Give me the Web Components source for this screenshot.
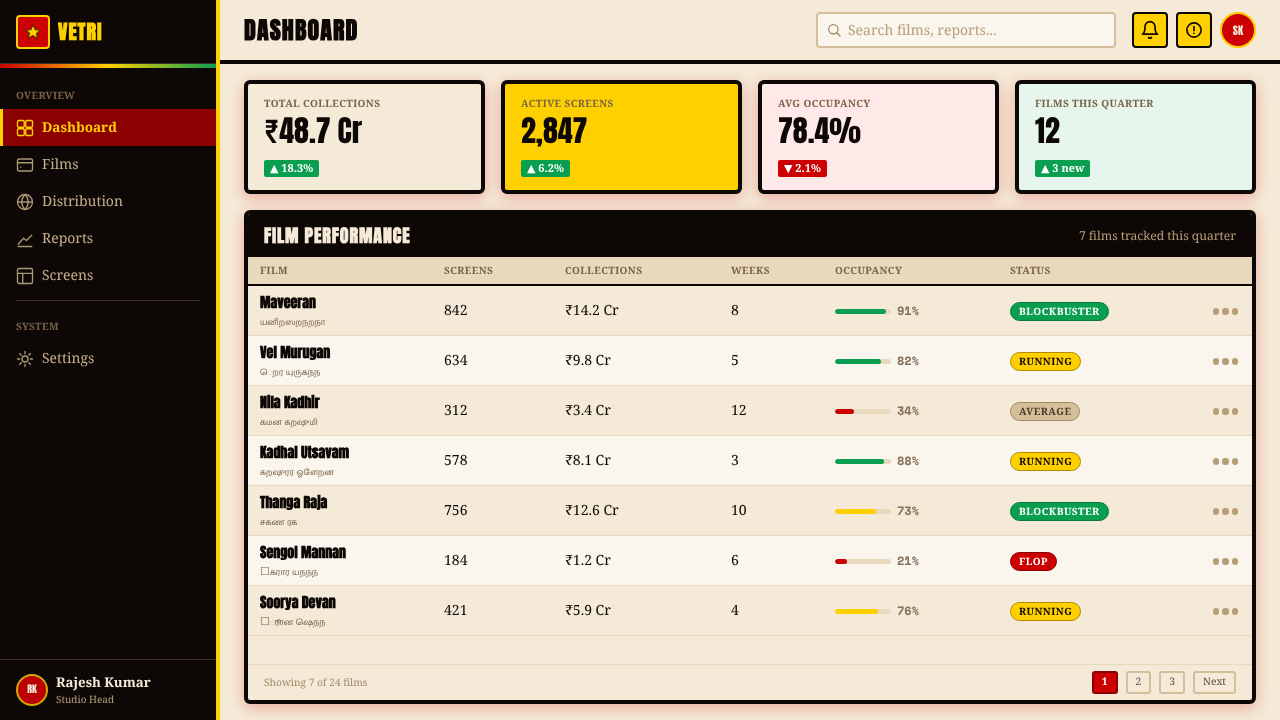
<!doctype html>
<html>
<head>
<meta charset="utf-8">
<title>Vetri Dashboard</title>
<style>
	html, body { margin: 0; height: 100%; }
	body { background: #f5ead8; font-family: 'Noto Serif', serif; color: #0d0806; overflow: hidden; text-rendering: geometricPrecision; }
</style>
</head>
<body>
<vetri-app>
	<vetri-sidebar slot="side"></vetri-sidebar>
	<vetri-topbar slot="top"></vetri-topbar>
	<stat-card slot="stats" label="TOTAL COLLECTIONS" value="₹48.7 Cr" delta="▲ 18.3%"></stat-card>
	<stat-card slot="stats" label="ACTIVE SCREENS" value="2,847" delta="▲ 6.2%" tone="yellow"></stat-card>
	<stat-card slot="stats" label="AVG OCCUPANCY" value="78.4%" delta="▼ 2.1%" tone="pink" down></stat-card>
	<stat-card slot="stats" label="FILMS THIS QUARTER" value="12" delta="▲ 3 new" tone="mint"></stat-card>
	<film-panel slot="panel">
		<film-row name="Maveeran" tamil="யனிறஸறநறநா" screens="842" money="₹14.2 Cr" weeks="8" occ="91" bar="green" status="BLOCKBUSTER"></film-row>
		<film-row alt name="Vel Murugan" tamil="ெறர யுருகநந" screens="634" money="₹9.8 Cr" weeks="5" occ="82" bar="green" status="RUNNING"></film-row>
		<film-row name="Nila Kadhir" tamil="கமன கறஷுமி" screens="312" money="₹3.4 Cr" weeks="12" occ="34" bar="red" status="AVERAGE"></film-row>
		<film-row alt name="Kadhal Utsavam" tamil="கறஷுரர ஓளேறன" screens="578" money="₹8.1 Cr" weeks="3" occ="88" bar="green" status="RUNNING"></film-row>
		<film-row name="Thanga Raja" tamil="சகண ரக" screens="756" money="₹12.6 Cr" weeks="10" occ="73" bar="yellow" status="BLOCKBUSTER"></film-row>
		<film-row alt name="Sengol Mannan" tamil="☐கரார யநநந" screens="184" money="₹1.2 Cr" weeks="6" occ="21" bar="red" status="FLOP"></film-row>
		<film-row name="Soorya Devan" tamil="☐ூரான ஷெநந" screens="421" money="₹5.9 Cr" weeks="4" occ="76" bar="yellow" status="RUNNING"></film-row>
	</film-panel>
</vetri-app>

<script>
// small helper, every element gets an open shadow root from a template string
function shadow(el, html) {
	let t = document.createElement('template')
	t.innerHTML = html
	el.attachShadow({ mode: 'open' }).appendChild(t.content.cloneNode(true))
}

const ICONS = {
	dashboard: '<rect x="2" y="2" width="9" height="9" rx="1.500"/><rect x="13" y="2" width="9" height="9" rx="1.500"/><rect x="2" y="13" width="9" height="9" rx="1.500"/><rect x="13" y="13" width="9" height="9" rx="1.500"/>',
	films: '<rect x="2" y="4" width="20" height="16" rx="2"/><path d="M2 9h20M6 15h.01"/>',
	globe: '<circle cx="12" cy="12" r="10"/><path d="M2 12h20M12 2c3.200 3 4.200 6.500 4.200 10s-1 7-4.200 10c-3.200-3-4.200-6.500-4.200-10s1-7 4.200-10z"/>',
	reports: '<path d="M3 22h18"/><path d="M3 19l7-8 4 3 7-7"/>',
	screens: '<rect x="2" y="2" width="20" height="20" rx="2"/><path d="M2 8.500h20M9 8.500V22"/>',
	settings: '<circle cx="12" cy="12" r="4"/><path d="M12 2v3M12 19v3M2 12h3M19 12h3M5 5l2 2M17 17l2 2M5 19l2-2M17 7l2-2"/>',
	search: '<circle cx="11" cy="11" r="7"/><path d="M21 21l-4.800-4.800"/>',
	bell: '<path d="M6 8a6 6 0 0 1 12 0c0 7 3 9 3 9H3s3-2 3-9"/><path d="M10.300 21a2 2 0 0 0 3.400 0"/>',
	alert: '<circle cx="12" cy="12" r="9.500"/><path d="M12 7.500v5.500M12 16.500h.01"/>'
}

function icon(name, size, width) {
	return `<svg width="${size}" height="${size}" viewBox="0 0 24 24" fill="none" stroke="currentColor" stroke-width="${width || 2}" stroke-linecap="round" stroke-linejoin="round">${ICONS[name]}</svg>`
}

class VetriApp extends HTMLElement {
	constructor() {
		super()
		shadow(this, `
			<style>
				/* own layer without a background, text gets grey antialiasing like the reference */
				:host { display: grid; grid-template-columns: 220px 1fr; height: 720px; will-change: transform; }
				.main { display: flex; flex-direction: column; min-width: 0; height: 720px; }
				.content { flex: 1; min-height: 0; display: flex; flex-direction: column; gap: 16px; padding: 16px 24px; }
				.stats { display: grid; grid-template-columns: repeat(4, 1fr); gap: 16px; }
				.panel { flex: 1; min-height: 0; display: flex; }
			</style>
			<slot name="side"></slot>
			<div class="main">
				<slot name="top"></slot>
				<div class="content">
					<div class="stats"><slot name="stats"></slot></div>
					<div class="panel"><slot name="panel"></slot></div>
				</div>
			</div>
		`)
	}
}

class NavItem extends HTMLElement {
	constructor() {
		super()
		shadow(this, `
			<style>
				:host { display: flex; align-items: center; gap: 8px; height: 37px; padding-left: 13px; color: #c8b08a; font-size: 14px; border-left: 3px solid transparent; box-sizing: border-box; }
				:host([active]) { background: #8b0000; color: #ffd000; border-left-color: #ffd000; font-weight: 700; font-size: 13.500px; }
				:host([active]) span { margin-bottom: 2px; }
				svg { display: block; flex: none; opacity: .85; }
				:host([active]) svg { opacity: 1; }
			</style>
			${icon(this.getAttribute('icon'), 18, 1.8)}
			<span><slot></slot></span>
		`)
	}
}

class VetriSidebar extends HTMLElement {
	constructor() {
		super()
		shadow(this, `
			<style>
				:host { display: flex; flex-direction: column; box-sizing: border-box; width: 220px; height: 720px; background: #0d0806; border-right: 4px solid #ffd000; }
				.brand { display: flex; align-items: center; gap: 8px; height: 63px; padding: 0 16px; box-sizing: border-box; }
				.logo { width: 34px; height: 34px; box-sizing: border-box; background: #cc0000; border: 2px solid #ffd000; border-radius: 4px; display: flex; align-items: center; justify-content: center; }
				.logo svg { display: block; }
				.word { font: 700 20px/1 'Anton', sans-serif; color: #ffd000; letter-spacing: 1px; }
				.stripe { height: 4px; background: linear-gradient(90deg, #cc0000, #ffd000 50%, #0a9e50); border-top: 1px solid #3a2c1e; }
				.head { font-size: 10px; line-height: 14px; font-weight: 700; letter-spacing: .4px; color: #7a6248; padding: 0 16px; }
				.head.first { margin-top: 20px; margin-bottom: 7px; }
				.head.second { margin-top: 18px; margin-bottom: 7px; }
				.rule { height: 1px; background: #3f3022; margin: 6px 16px 0; }
				.grow { flex: 1; }
				.user { display: flex; align-items: center; gap: 8px; height: 60px; padding: 0 16px; border-top: 1px solid #3f3022; }
				.av { width: 32px; height: 32px; box-sizing: border-box; border-radius: 50%; background: #bb0000; border: 2px solid #d4ad00; color: #f5ead8; font: 400 10px/1 'Anton', sans-serif; display: flex; align-items: center; justify-content: center; }
				.name { font-size: 13.300px; line-height: 16px; margin-bottom: 2px; font-weight: 700; color: #f5ead8; }
				.role { font-size: 10px; line-height: 14px; color: #b89e78; margin-top: 2px; }
			</style>
			<div class="brand">
				<div class="logo"><svg width="18" height="18" viewBox="0 0 24 24"><path d="M12 2.500l2.900 6.300 6.900.8-5.100 4.700 1.400 6.800L12 16.800l-6.100 3.500 1.400-6.800L2.200 9.600l6.900-.8z" fill="#ffd000" stroke="#5a2c00" stroke-width="1.500" stroke-linejoin="round"/></svg></div>
				<div class="word">VETRI</div>
			</div>
			<div class="stripe"></div>
			<div class="head first">OVERVIEW</div>
			<nav-item icon="dashboard" active>Dashboard</nav-item>
			<nav-item icon="films">Films</nav-item>
			<nav-item icon="globe">Distribution</nav-item>
			<nav-item icon="reports">Reports</nav-item>
			<nav-item icon="screens">Screens</nav-item>
			<div class="rule"></div>
			<div class="head second">SYSTEM</div>
			<nav-item icon="settings">Settings</nav-item>
			<div class="grow"></div>
			<div class="user">
				<div class="av">RK</div>
				<div>
					<div class="name">Rajesh Kumar</div>
					<div class="role">Studio Head</div>
				</div>
			</div>
		`)
	}
}

class VetriTopbar extends HTMLElement {
	constructor() {
		super()
		shadow(this, `
			<style>
				:host { display: flex; align-items: center; height: 60px; padding: 0 24px; border-bottom: 4px solid #0d0806; background: #f5ead8; }
				.title { font: 700 24px/1 'Anton', sans-serif; letter-spacing: 1.100px; color: #0d0806; flex: 1; }
				.search { display: flex; align-items: center; gap: 6px; width: 300px; height: 36px; box-sizing: border-box; padding: 0 8px; background: #faf6ee; border: 2px solid #d4bf9a; border-radius: 4px; color: #a08a68; margin-right: 16px; }
				.search svg { display: block; flex: none; }
				.ph { font-size: 14px; color: #b89e78; }
				.btn { width: 36px; height: 36px; box-sizing: border-box; background: #ffd000; border: 2px solid #0d0806; border-radius: 4px; display: flex; align-items: center; justify-content: center; margin-right: 8px; color: #0d0806; }
				.av { width: 36px; height: 36px; box-sizing: border-box; border-radius: 50%; background: #cc0000; border: 2px solid #ffd000; color: #f5ead8; font: 400 11px/1 'Anton', sans-serif; display: flex; align-items: center; justify-content: center; }
			</style>
			<div class="title">DASHBOARD</div>
			<div class="search">${icon('search', 16)}<span class="ph">Search films, reports...</span></div>
			<div class="btn">${icon('bell', 20)}</div>
			<div class="btn">${icon('alert', 18, 2.2)}</div>
			<div class="av">SK</div>
		`)
	}
}

class StatCard extends HTMLElement {
	constructor() {
		super()
		shadow(this, `
			<style>
				:host { display: block; box-sizing: border-box; height: 114px; padding: 12px 16px; background: #f5ead8; border: 4px solid #0d0806; border-radius: 6px; box-shadow: 0 4px 16px rgba(204, 0, 0, .28); }
				:host([tone="yellow"]) { background: #ffd000; }
				:host([tone="pink"]) { background: #ffe8e8; }
				:host([tone="mint"]) { background: #e6f6ec; }
				.label { font-size: 10px; line-height: 14px; font-weight: 700; letter-spacing: .4px; color: #7a6248; }
				.value { font: 400 30px/42px 'Anton', sans-serif; color: #0d0806; }
				.delta { display: inline-block; margin-top: 8px; padding: 0 6px; height: 17px; line-height: 17px; font-family: 'Noto Serif', 'DejaVu Sans', serif; font-size: 11px; font-weight: 700; color: #fff; background: #0a9e50; border-radius: 2px; vertical-align: top; }
				:host([down]) .delta { background: #cc0000; }
			</style>
			<div class="label">${this.getAttribute('label')}</div>
			<div class="value">${this.getAttribute('value')}</div>
			<span class="delta">${this.getAttribute('delta')}</span>
		`)
	}
}

const COLUMNS = '184px 121px 166px 104px 175px 1fr'

class FilmPanel extends HTMLElement {
	constructor() {
		super()
		shadow(this, `
			<style>
				:host { flex: 1; display: flex; flex-direction: column; box-sizing: border-box; background: #f5ead8; border: 4px solid #0d0806; border-radius: 6px; box-shadow: 0 4px 16px rgba(204, 0, 0, .28); overflow: hidden; }
				.bar { display: flex; align-items: center; justify-content: space-between; height: 43px; flex: none; padding: 0 16px; background: #0d0806; }
				.heading { font: 700 18px/1 'Anton', sans-serif; letter-spacing: .9px; color: #f5ead8; }
				.count { font-size: 12.150px; color: #b89e78; }
				.cols { display: grid; grid-template-columns: ${COLUMNS}; align-items: center; flex: none; height: 27px; background: #e8d8bc; border-bottom: 2px solid #0d0806; font-size: 10px; font-weight: 700; letter-spacing: .4px; color: #7a6248; }
				.cols span { padding: 0 0 2px 12px; }
				.rows { flex: 1; min-height: 0; }
				.foot { display: flex; align-items: center; gap: 8px; flex: none; height: 35px; padding: 0 16px; border-top: 1px solid #e8d8bc; font-size: 10.200px; color: #a08a68; }
				.foot .info { flex: 1; padding-bottom: 2px; }
				.page { height: 23px; box-sizing: border-box; padding: 0 8px 2px; display: flex; align-items: center; border: 2px solid #d4bf9a; border-radius: 3px; font-size: 10.300px; color: #5a4a38; }
				.page.on { background: #cc0000; border-color: #8b0000; color: #fff; font-weight: 700; }
			</style>
			<div class="bar">
				<div class="heading">FILM PERFORMANCE</div>
				<div class="count">7 films tracked this quarter</div>
			</div>
			<div class="cols"><span>FILM</span><span>SCREENS</span><span>COLLECTIONS</span><span>WEEKS</span><span>OCCUPANCY</span><span>STATUS</span></div>
			<div class="rows"><slot></slot></div>
			<div class="foot">
				<div class="info">Showing 7 of 24 films</div>
				<div class="page on">1</div>
				<div class="page">2</div>
				<div class="page">3</div>
				<div class="page">Next</div>
			</div>
		`)
	}
}

const PILLS = {
	BLOCKBUSTER: 'background:#0a9e50;color:#fff;border-color:#087a3e',
	RUNNING: 'background:#ffd000;color:#0d0806;border-color:#b08a00',
	AVERAGE: 'background:#d4bf9a;color:#4a3a28;border-color:#a08a68',
	FLOP: 'background:#cc0000;color:#fff;border-color:#8b0000'
}
const BARS = { green: '#0a9e50', yellow: '#ffd000', red: '#cc0000' }

class FilmRow extends HTMLElement {
	constructor() {
		super()
		let a = n => this.getAttribute(n)
		let tamil = a('tamil').replace('☐', '<span class="box">☐</span>')
		shadow(this, `
			<style>
				:host { display: grid; grid-template-columns: ${COLUMNS}; align-items: center; box-sizing: border-box; height: 50px; background: #f5ead8; border-bottom: 1px solid #e8d8bc; font-size: 14px; color: #0d0806; }
				:host([alt]) { background: #faf6ee; }
				.cell { padding-left: 12px; }
				.name { font: 700 14px/20px 'Anton', sans-serif; color: #0d0806; }
				.tamil { font: 400 9px/14px 'Mukta Malar', 'DejaVu Sans', serif; color: #7a6248; margin-top: 3px; }
				.box { font: 400 11px/10px 'DejaVu Sans', sans-serif; }
				.title { padding-top: 1px; }
				.occ { display: flex; align-items: center; gap: 6px; padding-top: 2px; }
				.track { width: 56px; height: 5px; border-radius: 3px; background: #e8d8bc; overflow: hidden; }
				.fill { height: 100%; border-radius: 3px; }
				.pct { font: 700 12px/1 'Space Mono', monospace; color: #85705a; }
				.pill { display: inline-block; box-sizing: border-box; height: 19px; line-height: 17px; padding: 0 8px; border: 1px solid; border-radius: 10px; font-size: 10px; font-weight: 700; letter-spacing: .5px; vertical-align: middle; }
				.status { display: flex; align-items: center; justify-content: space-between; padding-top: 2px; padding-right: 14px; }
				.dots { display: flex; gap: 3px; }
				.dots i { width: 6.500px; height: 6.500px; border-radius: 50%; background: #b89e78; }
			</style>
			<div class="cell title">
				<div class="name">${a('name')}</div>
				<div class="tamil">${tamil}</div>
			</div>
			<div class="cell">${a('screens')}</div>
			<div class="cell">${a('money')}</div>
			<div class="cell">${a('weeks')}</div>
			<div class="cell occ">
				<div class="track"><div class="fill" style="width:${a('occ')}%;background:${BARS[a('bar')]}"></div></div>
				<span class="pct">${a('occ')}%</span>
			</div>
			<div class="cell status">
				<span class="pill" style="${PILLS[a('status')]}">${a('status')}</span>
				<span class="dots"><i></i><i></i><i></i></span>
			</div>
		`)
	}
}

customElements.define('nav-item', NavItem)
customElements.define('vetri-sidebar', VetriSidebar)
customElements.define('vetri-topbar', VetriTopbar)
customElements.define('stat-card', StatCard)
customElements.define('film-row', FilmRow)
customElements.define('film-panel', FilmPanel)
customElements.define('vetri-app', VetriApp)
</script>
</body>
</html>
